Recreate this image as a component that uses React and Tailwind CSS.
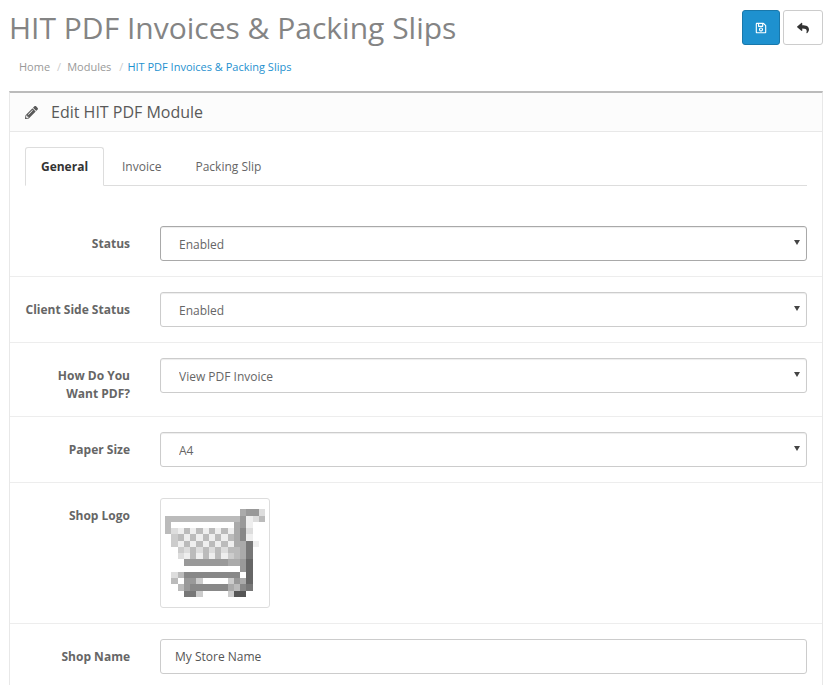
import React from "react";
import { FaPencilAlt, FaRegSave, FaReply } from "react-icons/fa";

// 16x16 shop logo, one hex digit of grey per pixel
const cart = [
  "................",
  "............a99d",
  "bbbbbbbbbbbb9edb",
  "bffffffffffa9ef.",
  "bdebebebebea8df.",
  ".cbebebebeba8ef.",
  ".cebebebebeaa7e.",
  "..cdbdbdbdbba7..",
  "..debebebecba7..",
  "...9999999aa96..",
  "............96..",
  ".db888888888f6..",
  ".bf99cffffc9a6..",
  "..b9888888ab87..",
  "...77c....c55...",
  "................",
];

const Label = ({ children }) => (
  <label className="mb-[-2px] w-[135px] shrink-0 pl-[15px] pr-[15px] pt-[9px] text-right text-[12px] leading-[18px] font-bold text-[#666]">
    {children}
  </label>
);

const Row = ({ label, children, last }) => (
  <div className={`flex py-[15px] pr-[15px] ${last ? "" : "border-b border-[#ededed]"}`}>
    <Label>{label}</Label>
    <div className="flex-1 pl-[15px]">{children}</div>
  </div>
);

const Select = ({ value, focus }) => (
  <div className="relative h-[35px]">
    <select
      defaultValue={value}
      className={`h-[35px] w-full appearance-none rounded-[3px] border bg-white pt-[2px] pl-[18px] text-[12px] text-[#666] shadow-[inset_0_1px_1px_rgba(0,0,0,0.075)] ${
        focus ? "border-[#a9a9a9]" : "border-[#ccc]"
      }`}
    >
      <option>{value}</option>
    </select>
    <svg className="pointer-events-none absolute top-[14px] right-[7px]" width="6" height="5" viewBox="0 0 6 5">
      <path d="M0 0h6L3 5z" fill="#444" />
    </svg>
  </div>
);

export default function App() {
  return (
    <div className="h-[685px] overflow-hidden bg-white font-['Open_Sans',sans-serif] text-[12px] text-[#666]">
      <div className="flex items-start justify-between pt-[10px] pr-[15px] pl-[9px]">
        <h1 className="text-[30px] leading-[36px] font-normal text-[#848484]">HIT PDF Invoices &amp; Packing Slips</h1>
        <div className="flex gap-[3px]">
          <button className="flex h-[35px] w-[38px] items-center justify-center rounded-[3px] border border-[#1978ab] bg-[#1e91cf] text-white">
            <FaRegSave size={12} />
          </button>
          <button className="flex h-[35px] w-[40px] items-center justify-center rounded-[3px] border border-[#ccc] bg-white text-[#333]">
            <FaReply size={12} />
          </button>
        </div>
      </div>

      <ul className="mt-[13px] flex pl-[19px] text-[11px] leading-[16px] text-[#999]">
        <li>Home</li>
        <li className="pl-[7px] text-[#ccc]">/</li>
        <li className="pl-[6px]">Modules</li>
        <li className="pl-[8px] text-[#ccc]">/</li>
        <li className="pl-[4px] text-[#1e91cf]">HIT PDF Invoices &amp; Packing Slips</li>
      </ul>

      <div className="mt-[16px] ml-[9px] mr-[15px] border-x border-[#e8e8e8] border-t-2 border-t-[#bbb]">
        <div className="flex h-[39px] items-center gap-[13px] border-b border-[#e8e8e8] bg-[#fcfcfc] pl-[15px]">
          <FaPencilAlt size={13} className="text-[#595959]" />
          <h3 className="text-[16px] text-[#595959]">Edit HIT PDF Module</h3>
        </div>

        <div className="pt-[15px]">
          <div className="mx-[15px] flex h-[39px] border-b border-[#ddd]">
            <div className="h-[39px] w-[79px] rounded-t-[3px] border border-b-white border-[#ddd] bg-white text-center leading-[37px] font-bold text-[#333]">
              General
            </div>
            <div className="pl-[18px] leading-[39px]">Invoice</div>
            <div className="pl-[34px] leading-[39px] text-[#666]">Packing Slip</div>
          </div>

          <div className="mt-[25px]">
            <Row label="Status"><Select value="Enabled" focus /></Row>
            <Row label="Client Side Status"><Select value="Enabled" /></Row>
            <Row label={<>How Do You<br />Want PDF?</>}><Select value="View PDF Invoice" /></Row>
            <Row label="Paper Size"><Select value="A4" /></Row>
            <Row label="Shop Logo">
              <div className="h-[110px] w-[110px] rounded-[3px] border border-[#ddd] bg-white p-[4px]">
                <svg width="100" height="100" viewBox="0 0 16 16" shapeRendering="crispEdges">
                  {cart.map((row, y) =>
                    row.split("").map((c, x) =>
                      c === "." ? null : (
                        <rect key={`${x}-${y}`} x={x} y={y} width="1" height="1" fill={`#${c}${c}${c}`} />
                      )
                    )
                  )}
                </svg>
              </div>
            </Row>
            <Row label="Shop Name" last>
              <input
                defaultValue="My Store Name"
                className="h-[35px] w-full rounded-[3px] border border-[#ccc] bg-white px-[14px] text-[12px] text-[#555]"
              />
            </Row>
          </div>
        </div>
      </div>
    </div>
  );
}
